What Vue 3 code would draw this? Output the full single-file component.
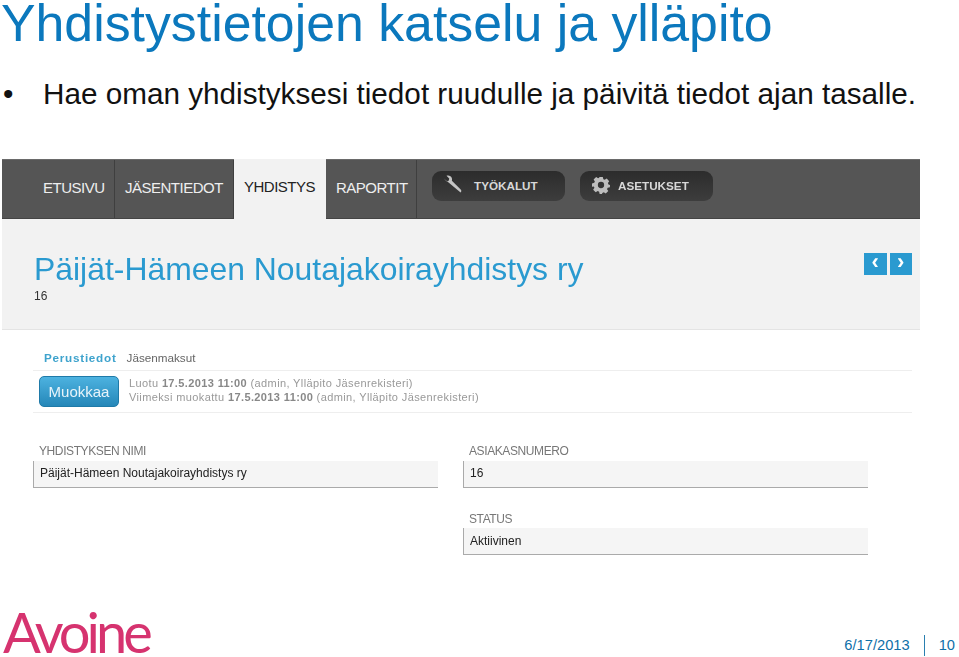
<script setup>
const tabs = [
  { label: 'ETUSIVU', width: 113, pad: 41 },
  { label: 'JÄSENTIEDOT', width: 119, pad: 10 },
  { label: 'YHDISTYS', width: 92, pad: 10, active: true },
  { label: 'RAPORTIT', width: 91, pad: 10 },
]
const meta = [
  { prefix: 'Luotu', when: '17.5.2013 11:00' },
  { prefix: 'Viimeksi muokattu', when: '17.5.2013 11:00' },
]
</script>

<template>
  <div class="slide">
    <h1 class="title">Yhdistystietojen katselu ja ylläpito</h1>
    <div class="bullet">
      <span class="dot">•</span>
      <span>Hae oman yhdistyksesi tiedot ruudulle ja päivitä tiedot ajan tasalle.</span>
    </div>

    <div class="shot">
      <nav class="nav">
        <div
          v-for="t in tabs"
          :key="t.label"
          class="tab"
          :class="{ active: t.active }"
          :style="{ width: t.width + 'px', paddingLeft: t.pad + 'px' }"
        >{{ t.label }}</div>
        <div class="tools">
          <div class="tool">
            <svg class="ico" viewBox="0 0 20 20" width="22" height="22">
              <path d="M2.5 4.2 5 6.6l2-.5.5-2L5 1.7c2-.8 4.3.2 4.9 2.2.2.8.2 1.5 0 2.2l8 8c.8.8.8 2-.1 2.8-.8.8-2 .8-2.800l-8-8c-2.400.9-4.6-.5-5.5-.9-.3-1.8.2-2.6z" fill="#c4c4c4"/>
            </svg>
            <span>TYÖKALUT</span>
          </div>
          <div class="tool gear">
            <svg class="ico" viewBox="0 0 20 20" width="18" height="18">
              <path fill-rule="evenodd" d="M8 1h4l.6 2.6 1.5.7 2.3-1.4 2.7 2.8-1.4 2.2.6 1.6L20 10v0l-.1 2.4-2.5.6-.7 1.6 1.4 2.2-2.8 2.7-2.2-1.4-1.6.7L11 20H8.500l-.6-2.6-1.6-.7-2.2 1.4-2.8-2.8 1.4-2.2-.7-1.5L0 11.900V8.200l2.5-.6.7-1.6-1.4-2.2 2.8-2.8 2.2 1.4 1.5-.6zm2 5.500a3.500 3.500 0 1 0 0 7 3.500 3.500 0 0 0 0-7z" fill="#bdbdbd"/>
            </svg>
            <span>ASETUKSET</span>
          </div>
        </div>
      </nav>

      <header class="band">
        <div>
          <h2 class="org">Päijät-Hämeen Noutajakoirayhdistys ry</h2>
          <div class="org-id">16</div>
        </div>
        <div class="pager">
          <span class="page-btn">‹</span>
          <span class="page-btn">›</span>
        </div>
      </header>

      <section class="content">
        <div class="subtabs">
          <span class="sub-active">Perustiedot</span>
          <span class="sub">Jäsenmaksut</span>
        </div>
        <div class="actions">
          <div class="edit">Muokkaa</div>
          <div class="meta">
            <div v-for="m in meta" :key="m.prefix">
              {{ m.prefix }} <b>{{ m.when }}</b> (admin, Ylläpito Jäsenrekisteri)
            </div>
          </div>
        </div>

        <div class="form">
          <div class="field">
            <label>YHDISTYKSEN NIMI</label>
            <div class="input">Päijät-Hämeen Noutajakoirayhdistys ry</div>
          </div>
          <div class="right-col">
            <div class="field">
              <label>ASIAKASNUMERO</label>
              <div class="input">16</div>
            </div>
            <div class="field tight">
              <label>STATUS</label>
              <div class="input">Aktiivinen</div>
            </div>
          </div>
        </div>
      </section>
    </div>

    <footer class="footer">
      <div class="logo">Avoine</div>
      <div class="foot-right">
        <span>6/17/2013</span>
        <span class="foot-sep"></span>
        <span>10</span>
      </div>
    </footer>
  </div>
</template>

<style scoped>
.slide {
  width: 959px;
  height: 657px;
  display: flex;
  flex-direction: column;
  overflow: hidden;
  background: #fff;
  font-family: "Liberation Sans", Arial, sans-serif;
}
.title {
  margin: 0 0 29px;
  height: 46px;
  padding-left: 1px;
  font-size: 51.8px;
  line-height: 46px;
  font-weight: 400;
  color: #0b78bd;
  white-space: nowrap;
}
.bullet {
  display: flex;
  height: 40px;
  padding-left: 3px;
  font-size: 29.7px;
  line-height: 38px;
  color: #111;
  white-space: nowrap;
}
.dot {
  width: 40px;
}
.shot {
  margin: 44px 0 0 2px;
  width: 918px;
  font-size: 12px;
  filter: blur(0.35px);
}
.nav {
  display: flex;
  height: 60px;
  background: #555;
  border-top: 1px solid #6a6a6a;
  border-bottom: 1px solid #444;
  box-sizing: border-box;
}
.tab {
  box-sizing: border-box;
  height: 58px;
  line-height: 56px;
  font-size: 15px;
  letter-spacing: -0.5px;
  color: #eee;
  border-right: 1px solid #3f3f3f;
}
.tab.active {
  height: 62px;
  margin-top: -1px;
  background: #f2f2f2;
  color: #222;
  border-right: 0;
}
.tools {
  display: flex;
  gap: 15px;
  margin: 11px 0 0 15px;
}
.tool {
  box-sizing: border-box;
  display: flex;
  align-items: center;
  width: 133px;
  height: 30px;
  padding: 0 0 2px 9px;
  border-radius: 9px;
  background: linear-gradient(#2c2c2c, #3d3d3d);
  color: #d8d8d8;
  font-size: 11.7px;
  font-weight: 700;
}
.tool .ico { margin-right: 11px; }
.tool.gear { padding-left: 12px; }
.tool.gear .ico { margin-right: 8px; }
.band {
  display: flex;
  justify-content: space-between;
  height: 111px;
  padding: 0 8px 0 32px;
  background: #f2f2f2;
  border-bottom: 1px solid #e4e4e4;
  box-sizing: border-box;
}
.org {
  margin: 32px 0 0;
  font-size: 31.9px;
  line-height: 36px;
  font-weight: 400;
  color: #2a9ad0;
  white-space: nowrap;
}
.org-id {
  margin-top: 2px;
  font-size: 12px;
  color: #333;
}
.pager {
  display: flex;
  gap: 3px;
  margin-top: 34px;
}
.page-btn {
  width: 22.5px;
  height: 22px;
  background: #2a9ad0;
  color: #fff;
  font-size: 22px;
  font-weight: 700;
  line-height: 18px;
  text-align: center;
}
.content {
  padding: 19px 8px 0 31px;
}
.subtabs {
  display: flex;
  gap: 10px;
  height: 21px;
  padding-left: 11px;
  font-size: 11.7px;
  line-height: 17px;
  border-bottom: 1px solid #eee;
}
.sub-active {
  color: #3ea3cd;
  font-weight: 700;
  letter-spacing: 0.75px;
}
.sub { color: #666; }
.actions {
  display: flex;
  align-items: center;
  gap: 10px;
  height: 41px;
  padding-left: 6px;
  border-bottom: 1px solid #eee;
}
.edit {
  box-sizing: border-box;
  width: 80px;
  height: 31px;
  border: 1px solid #1f7aa8;
  border-radius: 5px;
  background: linear-gradient(#4db2e0, #2587b8);
  color: #e8f4fa;
  font-size: 15px;
  line-height: 29px;
  text-align: center;
}
.meta {
  margin-bottom: 3px;
  font-size: 11px;
  line-height: 14.500px;
  letter-spacing: 0.38px;
  color: #999;
  white-space: nowrap;
}
.meta b { color: #888; }
.form {
  display: grid;
  grid-template-columns: 405px 405px;
  column-gap: 25px;
  margin-top: 31px;
}
.right-col {
  display: flex;
  flex-direction: column;
  gap: 24px;
}
label {
  display: block;
  height: 17px;
  padding-left: 6px;
  font-size: 12px;
  line-height: 14px;
  letter-spacing: -0.4px;
  color: #777;
}
.tight label { height: 16px; }
.tight .input { line-height: 27px; }
.input {
  box-sizing: border-box;
  height: 27px;
  padding-left: 6px;
  background: #f5f5f5;
  border-left: 1px solid #aaa;
  border-bottom: 1px solid #aaa;
  font-size: 12px;
  line-height: 25px;
  color: #222;
}
.footer {
  display: flex;
  justify-content: space-between;
  align-items: flex-end;
  margin-top: auto;
  height: 57px;
  padding: 0 4px 0 3px;
}
.logo {
  font-family: Lato, "Liberation Sans", sans-serif;
  font-size: 56px;
  line-height: 50px;
  letter-spacing: -4px;
  color: #d6336f;
}
.foot-right {
  display: flex;
  align-items: center;
  gap: 14px;
  height: 22px;
  margin-bottom: 1px;
  font-size: 14.7px;
  color: #0f6fa8;
}
.foot-sep {
  width: 1px;
  height: 21px;
  background: #2a7fb0;
}
</style>
